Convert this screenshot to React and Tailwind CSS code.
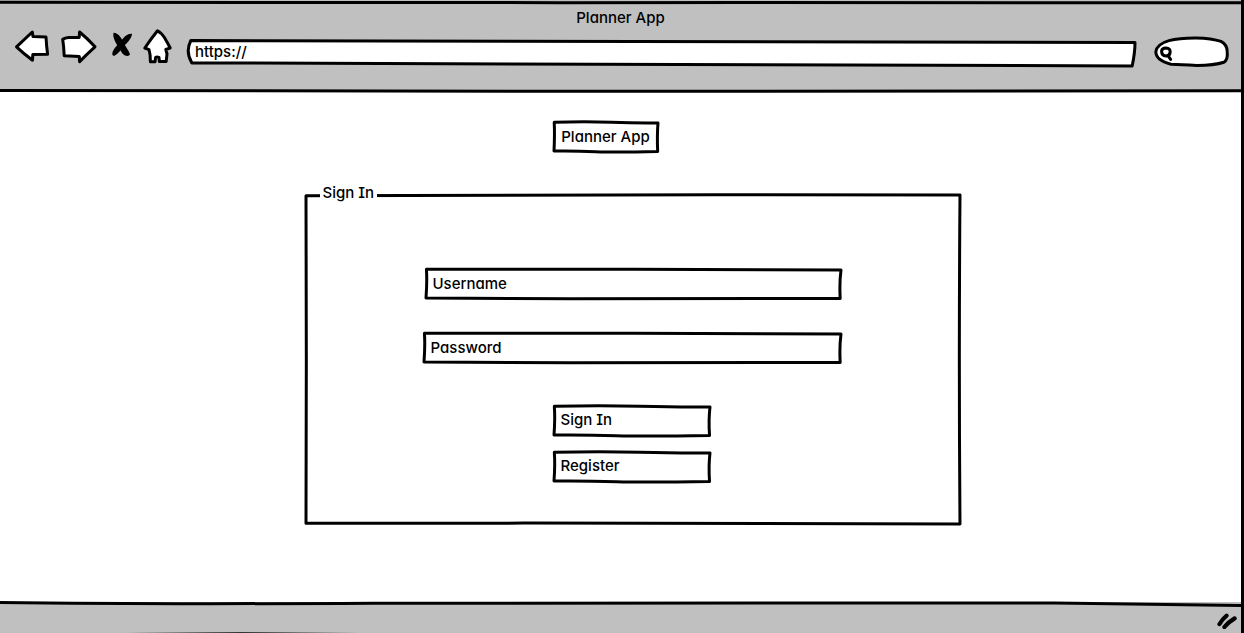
import React from "react";

const FRAMES = {
  box: "M0.4 1 Q30 -2 55 1 T100 3 Q99 45 99.7 98 Q60 102 40 99 T0 97 Q0.8 40 0.2 1 Z",
  wide: "M0.2 1 Q25 0 50 1 T100 3 Q99.6 45 99.8 98 Q60 100 35 99 T0 97 Q0.3 40 0.1 1 Z",
  panel: "M0 0.2 Q50 -0.3 100 0 Q99.8 50 100 100 Q50 99.6 0 99.8 Q0.1 50 0 0.2 Z",
  address: "M0.3 2 Q40 1 100 10 Q100 50 99.7 100 Q50 92 0.4 88 Q-0.3 45 0.3 2 Z",
};

function Frame({ shape, className = "inset-px", fill = "white" }) {
  return (
    <span aria-hidden="true" className={`pointer-events-none absolute ${className}`}>
      <svg className="block h-full w-full overflow-visible" viewBox="0 0 100 100" preserveAspectRatio="none">
        <path
          d={FRAMES[shape]}
          fill={fill}
          stroke="black"
          strokeWidth="3"
          strokeLinejoin="round"
          vectorEffect="non-scaling-stroke"
        />
      </svg>
    </span>
  );
}

function Rule({ d, className }) {
  return (
    <svg
      aria-hidden="true"
      className={`pointer-events-none absolute inset-x-0 w-full overflow-visible ${className}`}
      viewBox="0 0 100 4"
      preserveAspectRatio="none"
    >
      <path d={d} fill="none" stroke="black" strokeWidth="3" vectorEffect="non-scaling-stroke" />
    </svg>
  );
}

function NavButton({ label, width, children }) {
  return (
    <button type="button" aria-label={label} className="block shrink-0">
      <svg
        width={width}
        height="36"
        viewBox={`0 0 ${width} 36`}
        fill="white"
        stroke="black"
        strokeWidth="3"
        strokeLinejoin="round"
        strokeLinecap="round"
        className="block overflow-visible"
      >
        {children}
      </svg>
    </button>
  );
}

function Field({ label, type, className }) {
  return (
    <div className={`relative h-8 ${className}`}>
      <Frame shape="wide" />
      <input
        type={type}
        aria-label={label}
        placeholder={label}
        className="relative block h-full w-full bg-transparent px-2 pb-0.5 outline-none placeholder:text-black"
      />
    </div>
  );
}

function BoxButton({ type, children }) {
  return (
    <button type={type} className="relative block h-8 w-[158px] px-2 pb-0.5 text-left">
      <Frame shape="box" />
      <span className="relative">{children}</span>
    </button>
  );
}

export default function App() {
  return (
    <div className="flex min-h-screen flex-col border-r-[3px] border-black bg-white font-['Inter','Open_Sans',sans-serif] text-[15px] leading-6 font-medium text-black [font-feature-settings:'cv08','cv11']">
      <header className="relative bg-[#c0c0c0] pt-1.5 pb-[25px]">
        <Rule className="top-px h-1" d="M0 1.2 Q30 1.8 60 1.6 T100 1.8" />
        <Rule className="bottom-0 h-1" d="M0 2.4 Q30 3.6 60 3.2 T100 2.8" />
        <h1 className="relative text-center leading-[23px]">Planner App</h1>
        <div className="flex h-[38px] items-end pr-3 pl-3.5">
          <nav aria-label="Browser" className="flex gap-2.5 self-start">
            <NavButton label="Back" width={36}>
              <path d="M2.5 17.8 L18.3 3 L19 7.6 L32 8 Q32.4 16.4 33.6 25.2 L18.8 25.6 L18.5 31.2 Q9 24 2.5 17.8 Z" />
            </NavButton>
            <NavButton label="Forward" width={36}>
              <path d="M19.6 3 Q28 10 35 17.8 Q27 25 19.6 32.6 L19.3 27.4 L4.2 26.8 Q3.8 17 2.7 10.2 Q5 8.6 8.5 8.4 L19.2 8.4 Z" />
            </NavButton>
            <NavButton label="Stop" width={26}>
              <g fill="black" stroke="none">
                <path d="M7.6 3.8 C11 3.6 14.8 7.4 17.4 13.2 C19.4 17.4 23.6 22.6 24 25.6 C22.6 28 18 26.8 16.2 24.2 C13.4 19.6 10.6 16 8.8 11.8 C7.6 9 6.8 5.6 7.6 3.8 Z" />
                <path d="M26 4.8 C25.8 9 22.4 12.6 19.4 15.6 C16.4 18.8 13 24.6 8.4 26.8 C6.2 27 5.8 24.6 7 22 C9 17.6 12.8 14.8 15.4 11.4 C18.2 7.6 22 4.2 26 4.8 Z" />
              </g>
            </NavButton>
            <NavButton label="Home" width={32}>
              <path d="M15.5 1.8 Q19 3.4 22.4 8.5 Q26 14.6 28.2 19 L23.8 20.4 L25 25 L24.2 32.4 L17.4 32.6 L17 28.4 Q14.8 27.6 13.6 28.4 L13 32.8 L8.4 32.8 Q8.6 25.8 7 20.6 L2.8 19 Q9.4 9.4 15.5 1.8 Z" />
            </NavButton>
          </nav>
          <div className="relative ml-[13px] h-7 flex-1">
            <Frame shape="address" className="inset-px" />
            <input
              type="text"
              aria-label="Address"
              defaultValue="https://"
              className="relative block h-full w-full bg-transparent px-2 pb-1 text-[15px] outline-none"
            />
          </div>
          <label className="relative ml-[19px] block h-[30px] w-[74px] shrink-0">
            <svg
              aria-hidden="true"
              className="absolute inset-0 h-full w-full overflow-visible"
              viewBox="0 0 74 30"
              fill="white"
              stroke="black"
              strokeWidth="3"
              strokeLinecap="round"
            >
              <path d="M14 3.6 Q24 0.8 41 0.9 Q57 1.2 66 4.4 Q72 7.6 72.2 14.4 Q73 23 69 25.2 Q59 28.4 42 28.4 Q26 27.6 16 27.2 Q1 23.6 0.8 14.8 Q1.6 7.2 14 3.6 Z" />
              <path d="M6.6 14.2 Q6.8 11 11 11 Q15.4 11.2 15.2 15 Q14.8 19 11 19 Q6.6 18.6 6.6 14.2 Z M13 18.6 L15.6 22.4" />
            </svg>
            <input
              type="search"
              aria-label="Search"
              className="relative block h-full w-full bg-transparent pr-3 pl-5 outline-none"
            />
          </label>
        </div>
      </header>

      <main className="flex flex-1 justify-center pt-[29px] pb-8 pl-6">
        <div className="w-full max-w-[656px]">
          <div className="relative ml-[248px] flex h-8 w-[106px] items-center justify-center">
            <Frame shape="box" />
            <span className="relative">Planner App</span>
          </div>

          <form className="mt-7" onSubmit={(e) => e.preventDefault()}>
            <fieldset className="relative min-w-0">
              <Frame shape="panel" fill="none" className="inset-x-px -top-[10px] bottom-px" />
              <legend className="relative z-10 ml-[15px] bg-white px-[3px]">Sign In</legend>
              <div className="relative pt-[63px] pb-[42px]">
                <Field label="Username" type="text" className="mr-[119px] ml-[120px]" />
                <Field label="Password" type="password" className="mt-8 mr-[119px] ml-[118px]" />
                <div className="mt-[41px] ml-[248px] flex flex-col gap-3.5">
                  <BoxButton type="submit">Sign In</BoxButton>
                  <BoxButton type="button">Register</BoxButton>
                </div>
              </div>
            </fieldset>
          </form>
        </div>
      </main>

      <footer className="relative flex h-[31px] items-end justify-end bg-[#c0c0c0] pr-1 pb-1">
        <Rule className="top-0 h-1" d="M0 0.5 Q12 2.4 30 1.2 Q60 0 85 1 L100 3.6" />
        <svg aria-hidden="true" width="20" height="16" viewBox="0 0 20 16" stroke="black" strokeLinecap="round">
          <path d="M2.4 11.2 Q5 6.4 9.6 2.6" strokeWidth="4" />
          <path d="M7.4 14 Q11 9.4 17.6 5.4" strokeWidth="4.2" />
        </svg>
        <span aria-hidden="true" className="absolute bottom-0 left-[10%] h-px w-[19%] bg-gradient-to-r from-transparent via-[#333] to-transparent" />
      </footer>
    </div>
  );
}
